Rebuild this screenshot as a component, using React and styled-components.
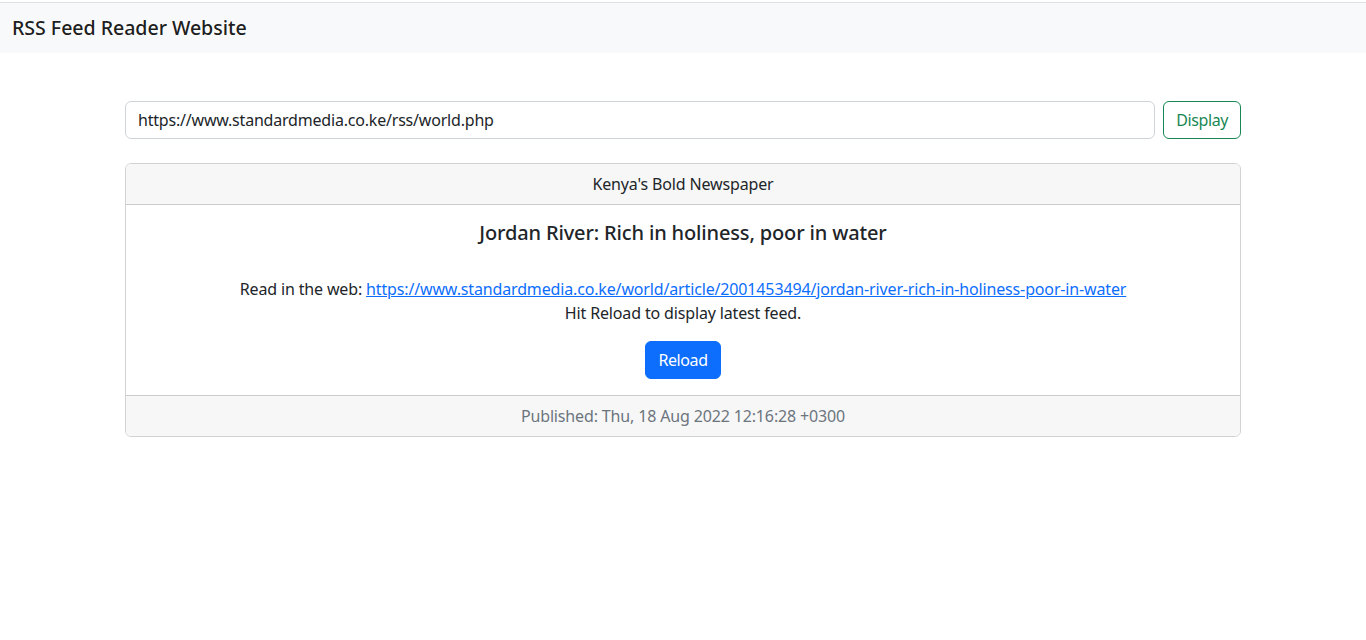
import styled, { createGlobalStyle } from 'styled-components';

const GlobalStyle = createGlobalStyle`
  * { box-sizing: border-box; }
  body {
    margin: 0;
    font-family: "Noto Sans", "Open Sans", sans-serif;
    font-size: 16px;
    line-height: 1.5;
    letter-spacing: -0.15px;
    color: #212529;
    background: #fff;
  }
`;

const Navbar = styled.nav`
  margin-top: 2px;
  border-top: 1px solid #dee2e6;
  background-color: #f8f9fa;
  height: 51px;
  display: flex;
  align-items: center;
  padding: 0 12px;
`;

const Brand = styled.span`
  font-size: 19.6px;
  font-weight: 500;
  letter-spacing: -0.05px;
  color: rgba(0, 0, 0, 0.9);
`;

const Container = styled.main`
  max-width: 1140px;
  margin: 0 auto;
  padding: 48px 12px 0;
`;

const UrlForm = styled.form`
  display: flex;
  gap: 8px;
  margin-bottom: 24px;
`;

const UrlInput = styled.input`
  flex: 1;
  height: 38px;
  padding: 6px 12px;
  font: inherit;
  letter-spacing: -0.2px;
  color: #212529;
  border: 1px solid #ced4da;
  border-radius: 6px;
  outline: none;
`;

const Button = styled.button`
  height: 38px;
  padding: 6px 12px;
  font: inherit;
  letter-spacing: -0.4px;
  border-radius: 6px;
  cursor: pointer;
  border: 1px solid ${({ $color }) => $color};
  color: ${({ $outline, $color }) => ($outline ? $color : '#fff')};
  background: ${({ $outline, $color }) => ($outline ? 'transparent' : $color)};
`;

const Card = styled.section`
  border: 1px solid rgba(0, 0, 0, 0.175);
  border-radius: 6px;
  text-align: center;
  overflow: hidden;
`;

const CardHeader = styled.div`
  background: #f7f7f7;
  padding: 8px 16px;
  border-bottom: 1px solid rgba(0, 0, 0, 0.175);
`;

const CardBody = styled.div`
  padding: 16px;
`;

const Title = styled.h5`
  margin: 0 0 32px;
  font-size: 20px;
  font-weight: 500;
  line-height: 1.2;
`;

const Text = styled.p`
  margin: 0 0 16px;
`;

const Link = styled.a`
  color: #0d6efd;
  text-decoration: underline;
`;

const CardFooter = styled.div`
  background: #f7f7f7;
  padding: 8px 16px;
  border-top: 1px solid rgba(0, 0, 0, 0.175);
  color: #6c757d;
`;

const articleUrl = 'https://www.standardmedia.co.ke/world/article/2001453494/jordan-river-rich-in-holiness-poor-in-water';

const App = () => {
  return (
    <>
      <GlobalStyle />
      <Navbar>
        <Brand>RSS Feed Reader Website</Brand>
      </Navbar>
      <Container>
        <UrlForm onSubmit={(e) => e.preventDefault()}>
          <UrlInput defaultValue="https://www.standardmedia.co.ke/rss/world.php" />
          <Button type="submit" $outline $color="#198754">Display</Button>
        </UrlForm>
        <Card>
          <CardHeader>Kenya's Bold Newspaper</CardHeader>
          <CardBody>
            <Title>Jordan River: Rich in holiness, poor in water</Title>
            <Text>
              Read in the web: <Link href={articleUrl}>{articleUrl}</Link>
              <br />
              Hit Reload to display latest feed.
            </Text>
            <Button type="button" $color="#0d6efd">Reload</Button>
          </CardBody>
          <CardFooter>Published: Thu, 18 Aug 2022 12:16:28 +0300</CardFooter>
        </Card>
      </Container>
    </>
  );
};

export default App;
